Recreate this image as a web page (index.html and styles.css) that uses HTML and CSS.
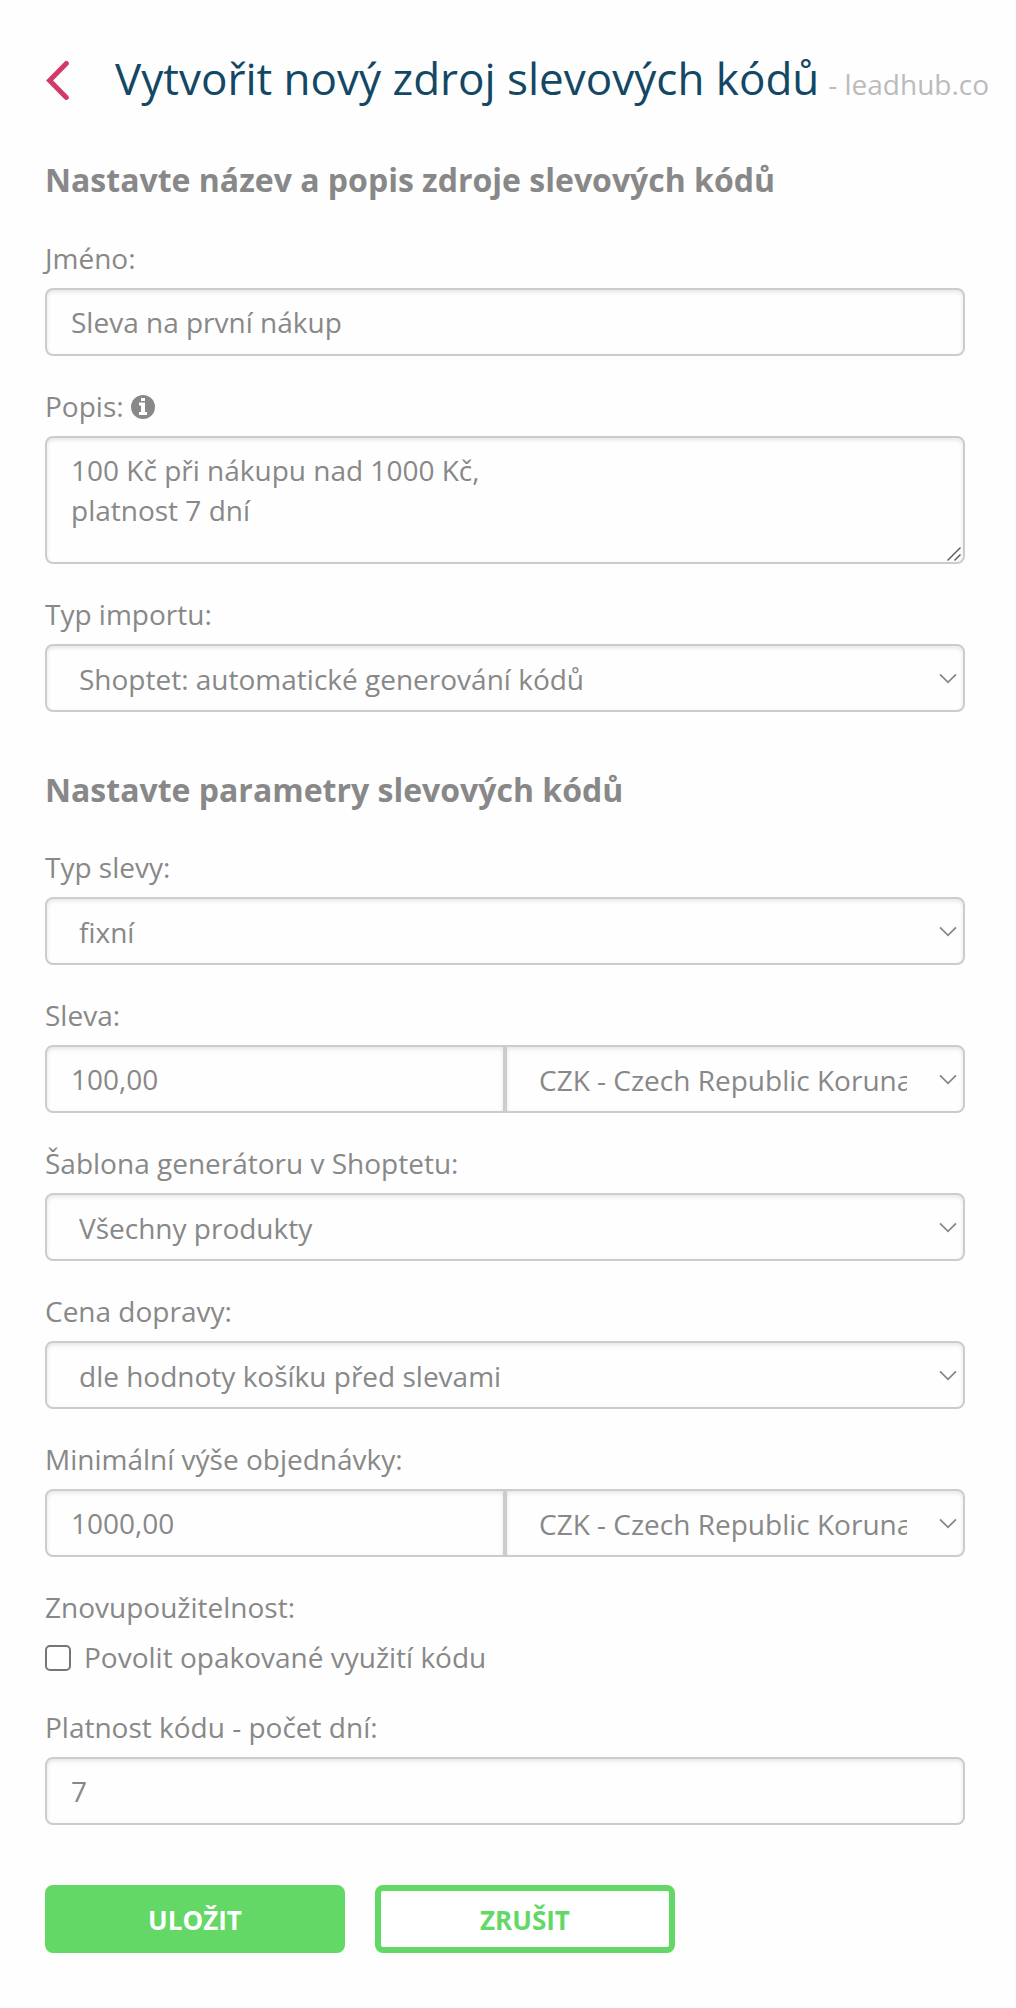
FILE: index.html
```html
<!DOCTYPE html>
<html lang="cs">
<head>
<meta charset="utf-8">
<title>Vytvořit nový zdroj slevových kódů</title>
<link rel="stylesheet" href="styles.css">
</head>
<body>
<svg class="sprite" aria-hidden="true">
  <symbol id="chevron" viewBox="0 0 18 11"><path d="M1 1.3l8 8 8-8" fill="none" stroke="#888" stroke-width="1.8"/></symbol>
</svg>
<main class="page">
  <header class="header">
    <a class="back" href="#" aria-label="Zpět"><svg width="24" height="40" viewBox="0 0 24 40"><path d="M20.3 3.4L3.6 20.4l16.7 17" fill="none" stroke="#d13b6a" stroke-width="5" stroke-linecap="round"/></svg></a>
    <h1 class="title">Vytvořit nový zdroj slevových kódů <small class="site">- leadhub.co</small></h1>
  </header>
  <form class="form">
    <h2 class="section">Nastavte název a popis zdroje slevových kódů</h2>
    <div class="field">
      <label class="label" for="name">Jméno:</label>
      <input class="control" id="name" type="text" value="Sleva na první nákup">
    </div>
    <div class="field">
      <label class="label" for="desc">Popis: <svg class="info" width="24" height="24" viewBox="0 0 24 24"><circle cx="12" cy="12" r="12" fill="#888"/><path d="M10 3h4v3h-4zM8 7.5h6V17h2v3H8v-3h2v-6.500H8z" fill="#fff"/></svg></label>
      <div class="stack">
        <textarea class="control area" id="desc">100 Kč při nákupu nad 1000 Kč,
platnost 7 dní</textarea>
        <svg class="grip" width="14" height="14" viewBox="0 0 14 14"><path d="M.5 13.5l13-13M7.5 13.5l6-6" stroke="#555" stroke-width="1.4"/></svg>
      </div>
    </div>
    <div class="field">
      <label class="label" for="import">Typ importu:</label>
      <div class="stack">
        <select class="control select" id="import"><option>Shoptet: automatické generování kódů</option></select>
        <svg class="arrow"><use href="#chevron"/></svg>
      </div>
    </div>
    <h2 class="section section-next">Nastavte parametry slevových kódů</h2>
    <div class="field">
      <label class="label" for="type">Typ slevy:</label>
      <div class="stack">
        <select class="control select" id="type"><option>fixní</option></select>
        <svg class="arrow"><use href="#chevron"/></svg>
      </div>
    </div>
    <div class="field">
      <label class="label" for="amount">Sleva:</label>
      <div class="group">
        <input class="control" id="amount" type="text" value="100,00">
        <div class="stack">
          <select class="control select" aria-label="Měna"><option>CZK - Czech Republic Koruna</option></select>
          <svg class="arrow"><use href="#chevron"/></svg>
        </div>
      </div>
    </div>
    <div class="field">
      <label class="label" for="template">Šablona generátoru v Shoptetu:</label>
      <div class="stack">
        <select class="control select" id="template"><option>Všechny produkty</option></select>
        <svg class="arrow"><use href="#chevron"/></svg>
      </div>
    </div>
    <div class="field">
      <label class="label" for="shipping">Cena dopravy:</label>
      <div class="stack">
        <select class="control select" id="shipping"><option>dle hodnoty košíku před slevami</option></select>
        <svg class="arrow"><use href="#chevron"/></svg>
      </div>
    </div>
    <div class="field">
      <label class="label" for="min">Minimální výše objednávky:</label>
      <div class="group">
        <input class="control" id="min" type="text" value="1000,00">
        <div class="stack">
          <select class="control select" aria-label="Měna"><option>CZK - Czech Republic Koruna</option></select>
          <svg class="arrow"><use href="#chevron"/></svg>
        </div>
      </div>
    </div>
    <div class="field">
      <span class="label">Znovupoužitelnost:</span>
      <label class="check"><input class="box" type="checkbox">Povolit opakované využití kódu</label>
    </div>
    <div class="field">
      <label class="label" for="days">Platnost kódu - počet dní:</label>
      <input class="control" id="days" type="text" value="7">
    </div>
    <div class="actions">
      <button class="button primary" type="button">ULOŽIT</button>
      <button class="button" type="button">ZRUŠIT</button>
    </div>
  </form>
</main>
</body>
</html>
```
FILE: styles.css
```css
* { box-sizing: border-box; }

body {
  margin: 0;
  background: #fefefe;
  color: #888;
  font: 28px/40px "Open Sans", sans-serif;
}

.sprite { display: none; }

.page { padding: 48px 0 55px 45px; }

.header {
  display: flex;
  align-items: flex-start;
  height: 60px;
  margin-bottom: 50px;
}

.back {
  display: flex;
  width: 70px;
  padding: 12px 0 0 1px;
}

.title {
  margin: 0;
  color: #134865;
  font-size: 44px;
  font-weight: 400;
  line-height: 60px;
  white-space: nowrap;
}

.site {
  margin-left: -2.5px;
  color: #bbb;
  font-size: 28px;
  line-height: 1;
}

.form { width: 920px; }

.section {
  margin: 0 0 36px;
  font-size: 32px;
  font-weight: 700;
  line-height: 44px;
}

.section-next { margin: 56px 0 35px; }

.field {
  display: flex;
  flex-direction: column;
  gap: 10px;
  margin-bottom: 30px;
}

.label { display: block; height: 40px; }

.info { display: inline-block; vertical-align: -2px; }

.control {
  width: 100%;
  height: 68px;
  margin: 0;
  padding: 0 24px;
  border: 2px solid #ccc;
  border-radius: 8px;
  outline: none;
  background: #fefefe;
  box-shadow: inset 0 2px 4px rgba(0, 0, 0, .1);
  color: #888;
  font: inherit;
  appearance: none;
}

.area {
  display: block;
  height: 128px;
  padding: 12px 24px;
  resize: none;
  overflow: hidden;
}

.select { padding: 2px 56px 0 32px; }

.stack { display: grid; }

.stack > * { grid-area: 1 / 1; }

.arrow {
  width: 18px;
  height: 11px;
  margin: 29px 8px 0 0;
  justify-self: end;
  pointer-events: none;
}

.grip {
  align-self: end;
  justify-self: end;
  margin: 0 4px 3px 0;
  pointer-events: none;
}

.group { display: grid; grid-template-columns: 1fr 1fr; }

.group > .control { border-radius: 8px 0 0 8px; }

.group .select { border-radius: 0 8px 8px 0; }

.check { display: flex; align-items: flex-start; gap: 13px; }

.box {
  width: 26px;
  height: 26px;
  margin: 8px 0 0;
  border: 2px solid #767676;
  border-radius: 5px;
  background: #fff;
  appearance: none;
}

.actions { display: flex; gap: 30px; margin-top: 60px; }

.button {
  width: 300px;
  height: 68px;
  padding: 2px 0 0;
  border: 6px solid #63d866;
  border-radius: 8px;
  background: #fff;
  color: #63d866;
  font: 700 26px/36px "Open Sans", sans-serif;
}

.primary { background: #63d866; color: #fff; }
```
